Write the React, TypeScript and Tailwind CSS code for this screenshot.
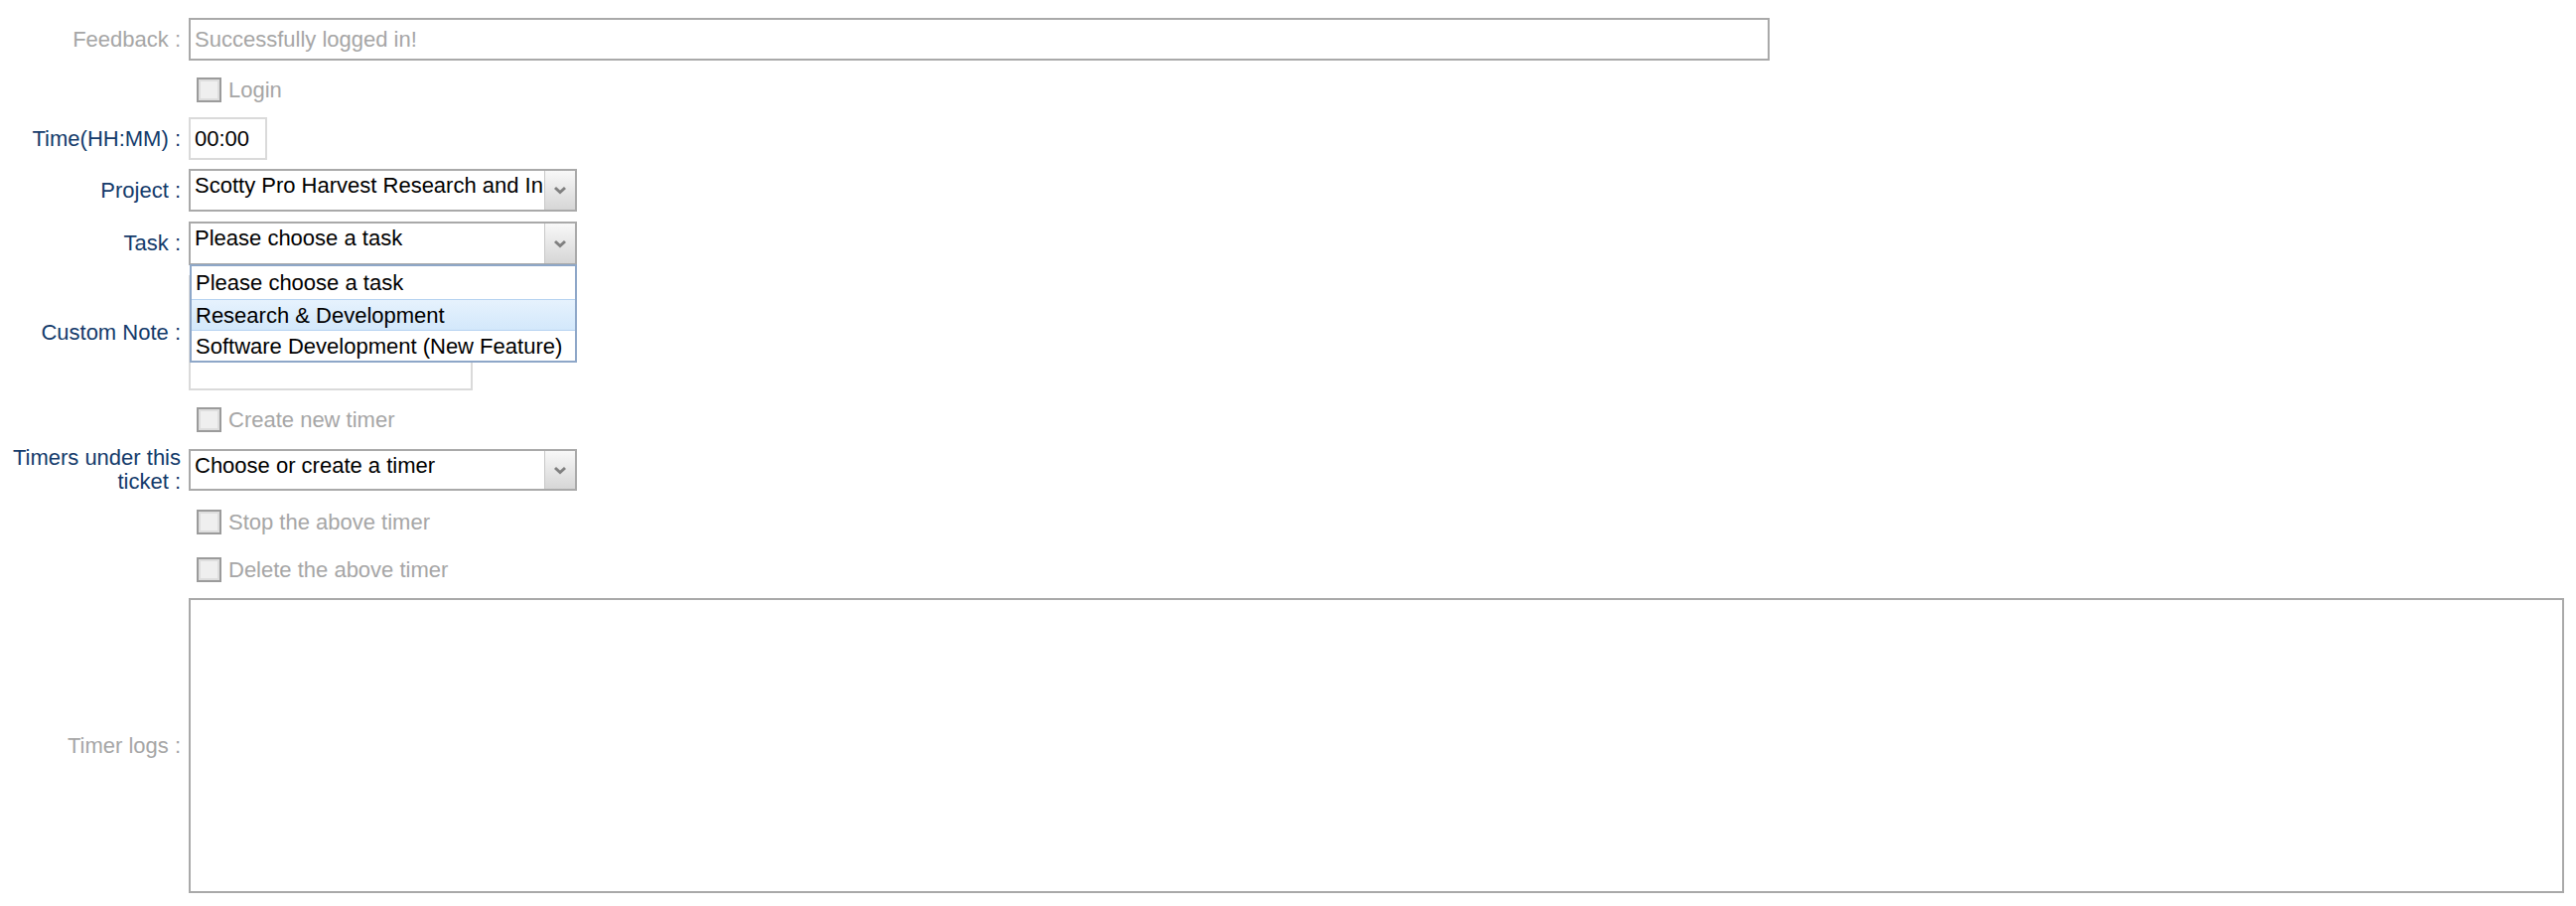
import React from 'react';

const font = { fontFamily: '"Liberation Sans", Arial, Helvetica, sans-serif' };

function Checkbox() {
  return (
    <span className="block w-[25px] h-[25px] border-2 border-[#9b9b9b] bg-[#f4f4f4] shrink-0">
      <span className="block w-full h-full border-2 border-[#dedede] bg-[#efefef]" />
    </span>
  );
}

function Chevron() {
  return (
    <svg width="14" height="9" viewBox="0 0 14 9" className="block">
      <polyline points="2,2 7,6.5 12,2" fill="none" stroke="#808080" strokeWidth="3" />
    </svg>
  );
}

function Select({ value, height = 'h-[43px]' }: { value: string; height?: string }) {
  return (
    <div className={`flex w-[391px] ${height} border-2 border-[#a9a9a9] bg-white`}>
      <div className="flex-1 overflow-hidden whitespace-nowrap pl-[4px] pt-[3px] leading-[24px] text-black">{value}</div>
      <div className="w-[31px] shrink-0 flex items-center justify-center border-l border-[#c8c8c8] bg-gradient-to-b from-[#f8f8f8] to-[#d6d6d6]">
        <Chevron />
      </div>
    </div>
  );
}

function Label({ children, muted }: { children: React.ReactNode; muted?: boolean }) {
  return (
    <div className={`w-[182px] shrink-0 pl-[8px] text-right leading-[24px] ${muted ? 'text-[#a6a6a6]' : 'text-[#143b6b]'}`}>
      {children}
    </div>
  );
}

function CheckRow({ label, className }: { label: string; className: string }) {
  return (
    <div className={`flex items-center h-[25px] ${className}`}>
      <div className="w-[198px] shrink-0" />
      <Checkbox />
      <span className="ml-[7px] text-[#a6a6a6] leading-[24px]">{label}</span>
    </div>
  );
}

export default function App() {
  return (
    <div className="w-[2594px] h-[912px] bg-white text-[22px] overflow-hidden" style={font}>
      <div className="flex flex-col">
        {/* Feedback */}
        <div className="flex items-center mt-[18px]">
          <Label muted>Feedback :</Label>
          <div className="ml-[8px] w-[1592px] h-[43px] border-2 border-[#a9a9a9] flex items-center pl-[4px] text-[#a6a6a6]">
            Successfully logged in!
          </div>
        </div>

        <CheckRow label="Login" className="mt-[17px]" />

        {/* Time */}
        <div className="flex items-center mt-[15px]">
          <Label>Time(HH:MM) :</Label>
          <div className="ml-[8px] w-[79px] h-[43px] border-2 border-[#dadada] flex items-center pl-[4px] text-black">
            00:00
          </div>
        </div>

        {/* Project */}
        <div className="flex items-center mt-[9px]">
          <Label>Project :</Label>
          <div className="ml-[8px]">
            <Select value="Scotty Pro Harvest Research and Innovation" />
          </div>
        </div>

        {/* Task, with its open option list */}
        <div className="flex items-center mt-[10px] relative z-10">
          <Label>Task :</Label>
          <div className="ml-[8px] relative">
            <Select value="Please choose a task" height="h-[44px]" />
            <div className="absolute left-[1px] top-[43px] w-[390px] border-2 border-[#8ea7c8] bg-white text-black">
              <div className="h-[33px] flex items-center pl-[4px]">Please choose a task</div>
              <div className="h-[32px] flex items-center pl-[4px] bg-gradient-to-b from-[#e6f2fd] to-[#d3e8fb] border-y border-[#b6d3f1]">
                Research &amp; Development
              </div>
              <div className="h-[30px] flex items-center pl-[4px]">Software Development (New Feature)</div>
            </div>
          </div>
        </div>

        {/* Custom note */}
        <div className="flex items-center mt-[10px]">
          <Label>Custom Note :</Label>
          <div className="ml-[8px] w-[286px] h-[116px] border-2 border-[#dadada]" />
        </div>

        <CheckRow label="Create new timer" className="mt-[17px]" />

        {/* Timers */}
        <div className="flex items-center h-[42px] mt-[17px]">
          <Label>Timers under this ticket :</Label>
          <div className="ml-[8px]">
            <Select value="Choose or create a timer" height="h-[42px]" />
          </div>
        </div>

        <CheckRow label="Stop the above timer" className="mt-[19px]" />
        <CheckRow label="Delete the above timer" className="mt-[23px]" />

        {/* Timer logs */}
        <div className="flex items-center mt-[16px]">
          <Label muted>Timer logs :</Label>
          <div className="ml-[8px] w-[2392px] h-[297px] border-2 border-[#a9a9a9]" />
        </div>
      </div>
    </div>
  );
}
